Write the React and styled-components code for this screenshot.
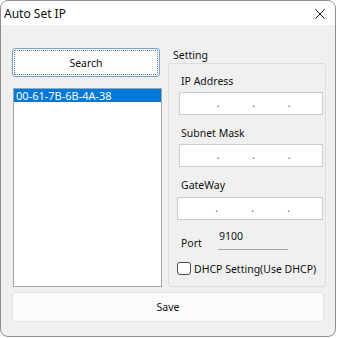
import styled, { createGlobalStyle } from 'styled-components'

const GlobalStyle = createGlobalStyle`
  html, body {
    margin: 0;
    padding: 0;
    background: #ffffff;
  }
  * {
    box-sizing: border-box;
  }
`

const Window = styled.div`
  width: 336px;
  height: 337px;
  border: 1px solid #8e8e8e;
  border-radius: 8px;
  overflow: hidden;
  display: flex;
  flex-direction: column;
  background: #f0f0f0;
  font-family: 'Noto Sans', 'Open Sans', sans-serif;
  font-size: 10.5px;
  color: #111111;
`

const TitleBar = styled.div`
  height: 24px;
  background: #ffffff;
  display: flex;
  align-items: center;
  justify-content: space-between;
  padding: 0 10px 0 3px;
`

const Title = styled.span`
  font-size: 12px;
  line-height: 14px;
  margin-top: 1px;
`

const CloseIcon = styled.svg`
  width: 10px;
  height: 10px;
  margin-top: 1px;
`

const Body = styled.div`
  flex: 1;
  padding: 23px 0 0 11px;
  display: flex;
  flex-direction: column;
`

const MainRow = styled.div`
  display: flex;
  gap: 6px;
  height: 239px;
`

const LeftColumn = styled.div`
  width: 150px;
  display: flex;
  flex-direction: column;
`

const SearchButton = styled.button`
  width: 148px;
  height: 29px;
  border: 1px solid #6ea7de;
  border-radius: 3px;
  background: #fdfdfd;
  outline: 1px dotted #7b7b7b;
  outline-offset: -3px;
  font: inherit;
  color: inherit;
  padding: 0;
`

const DeviceList = styled.ul`
  list-style: none;
  margin: 11px 0 0 1px;
  padding: 0;
  width: 149px;
  height: 199px;
  background: #ffffff;
  border: 1px solid #a5a5a5;
`

const DeviceItem = styled.li`
  height: 13px;
  line-height: 13px;
  padding-left: 2px;
  font-size: 11px;
  background: ${(p) => (p.$selected ? '#0078d7' : 'transparent')};
  color: ${(p) => (p.$selected ? '#ffffff' : '#000000')};
`

const Group = styled.div`
  width: 158px;
  display: flex;
  flex-direction: column;
`

const Legend = styled.div`
  margin: 1px 0 0 5px;
  line-height: 12px;
  height: 14px;
`

const GroupBox = styled.div`
  height: 224px;
  border: 1px solid #dcdcdc;
  border-radius: 3px;
  padding: 9px 2px 0 10px;
  display: flex;
  flex-direction: column;
`

const FieldLabel = styled.div`
  line-height: 16px;
  margin-top: ${(p) => p.$top || 0}px;
  padding-left: 2px;
`

const IpInput = styled.div`
  margin-top: ${(p) => p.$top || 3}px;
  margin-left: ${(p) => p.$shift || 0}px;
  height: 23px;
  background: #ffffff;
  border: 1px solid #cdcdcd;
  display: grid;
  grid-template-columns: 1fr 1fr 1fr 1fr;
  align-items: center;
`

const Octet = styled.span`
  position: relative;
  height: 100%;
  &:not(:last-child)::after {
    content: '.';
    position: absolute;
    right: -4px;
    top: 3px;
    font-size: 10px;
    line-height: 14px;
    color: #444;
  }
`

const PortRow = styled.div`
  margin-top: 8px;
  height: 23px;
  display: flex;
  align-items: flex-end;
  padding-left: 2px;
`

const PortLabel = styled.span`
  width: 37px;
  line-height: 16px;
`

const PortField = styled.div`
  width: 70px;
  height: 22px;
  align-self: flex-start;
  border-bottom: 1px solid #a8a8a8;
  line-height: 16px;
  padding-left: 1px;
`

const CheckRow = styled.label`
  margin-top: 11px;
  margin-left: -2px;
  display: flex;
  align-items: center;
  gap: 3px;
  height: 13px;
`

const CheckBox = styled.span`
  width: 14px;
  height: 13px;
  border: 1px solid #4a4a4a;
  border-radius: 3px;
  background: #ffffff;
`

const SaveButton = styled.button`
  margin-top: 5px;
  width: 312px;
  height: 30px;
  border: 1px solid #e2e2e2;
  border-radius: 4px;
  background: #fbfbfb;
  font: inherit;
  color: inherit;
  padding: 0;
`

const IpField = ({ top, shift }) => (
  <IpInput $top={top} $shift={shift}>
    <Octet />
    <Octet />
    <Octet />
    <Octet />
  </IpInput>
)

const App = () => {
  return (
    <>
      <GlobalStyle />
      <Window>
        <TitleBar>
          <Title>Auto Set IP</Title>
          <CloseIcon viewBox="0 0 10 10">
            <path d="M0.5 0.5 L9.5 9.5 M9.5 0.5 L0.5 9.5" stroke="#1a1a1a" strokeWidth="1" fill="none" />
          </CloseIcon>
        </TitleBar>
        <Body>
          <MainRow>
            <LeftColumn>
              <SearchButton>Search</SearchButton>
              <DeviceList>
                <DeviceItem $selected>00-61-7B-6B-4A-38</DeviceItem>
              </DeviceList>
            </LeftColumn>
            <Group>
              <Legend>Setting</Legend>
              <GroupBox>
                <FieldLabel>IP Address</FieldLabel>
                <IpField top={3} />
                <FieldLabel $top={10}>Subnet Mask</FieldLabel>
                <IpField top={3} />
                <FieldLabel $top={10}>GateWay</FieldLabel>
                <IpField top={4} shift={-2} />
                <PortRow>
                  <PortLabel>Port</PortLabel>
                  <PortField>9100</PortField>
                </PortRow>
                <CheckRow>
                  <CheckBox />
                  DHCP Setting(Use DHCP)
                </CheckRow>
              </GroupBox>
            </Group>
          </MainRow>
          <SaveButton>Save</SaveButton>
        </Body>
      </Window>
    </>
  )
}

export default App
